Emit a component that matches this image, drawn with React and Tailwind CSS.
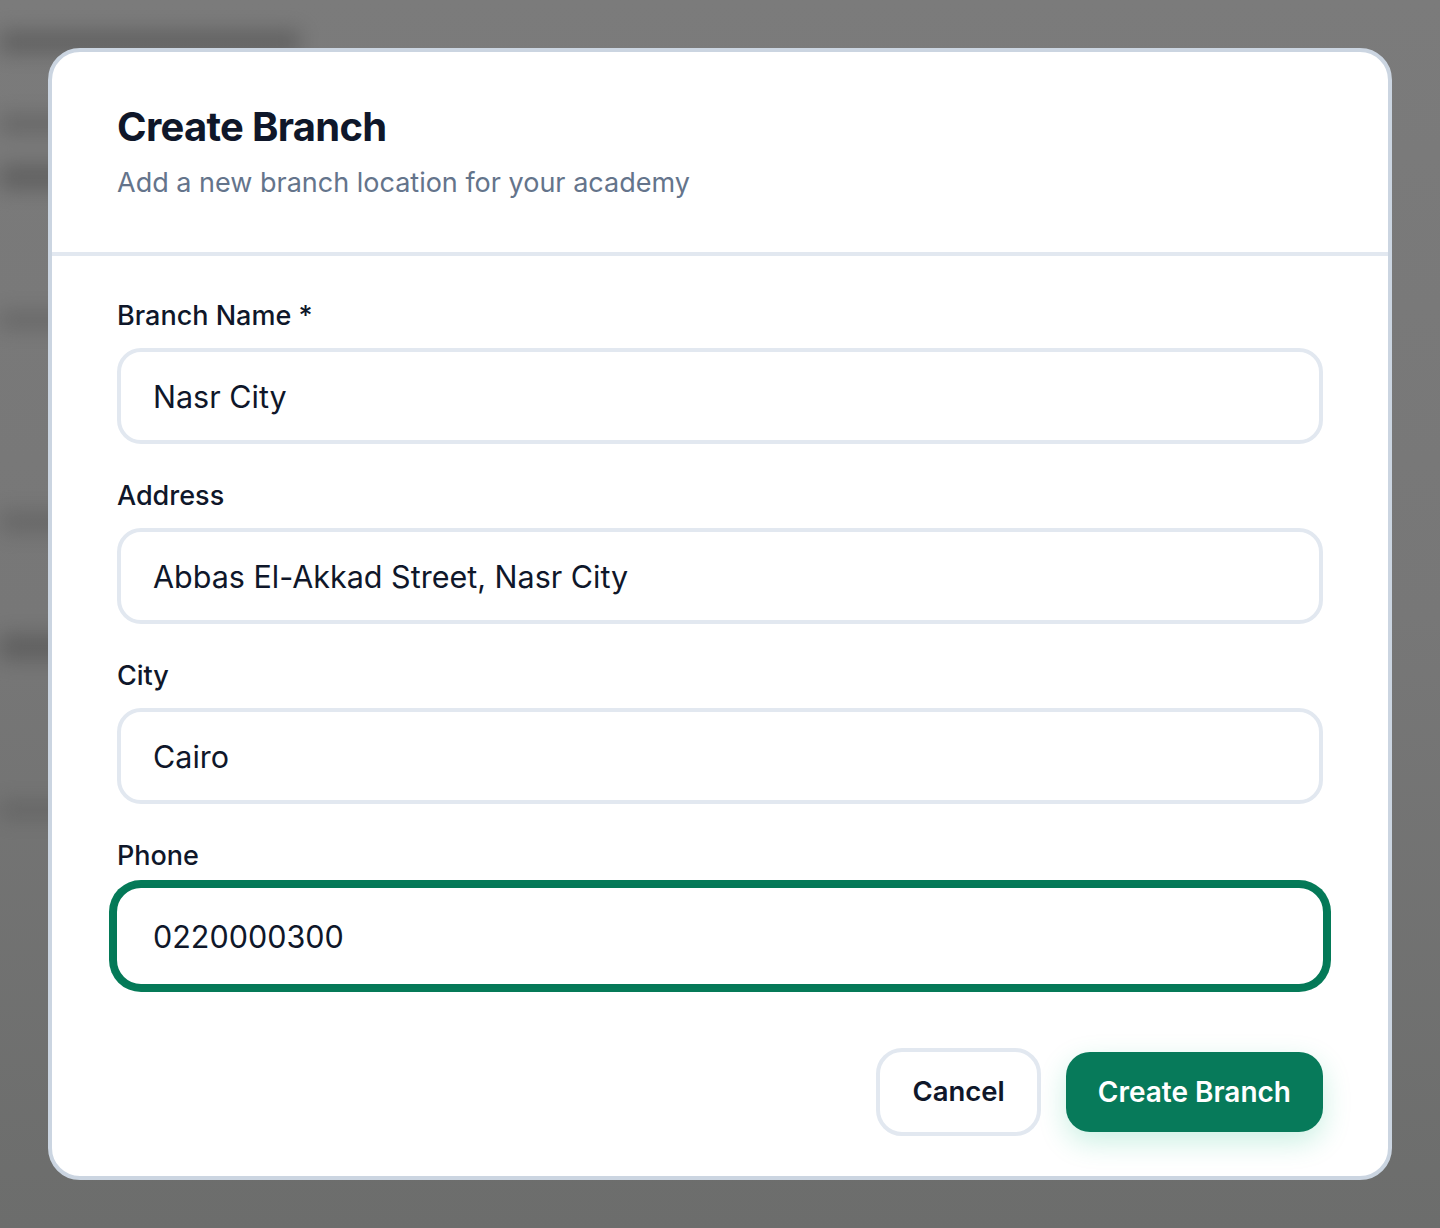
import { useState } from 'react';

const fields = [
  { id: 'name', label: 'Branch Name *', value: 'Nasr City' },
  { id: 'address', label: 'Address', value: 'Abbas El-Akkad Street, Nasr City' },
  { id: 'city', label: 'City', value: 'Cairo' },
  { id: 'phone', label: 'Phone', value: '0220000300' },
];

const Field = ({ field, focused, onChange }) => (
  <div className="flex flex-col">
    <label
      htmlFor={field.id}
      className="text-[27px] leading-[36px] font-medium text-[#0f172a] mb-[14px]"
    >
      {field.label}
    </label>
    <input
      id={field.id}
      value={field.value}
      onChange={(e) => onChange(field.id, e.target.value)}
      className={`h-[96px] w-full rounded-[24px] border-4 bg-white px-[32px] text-[30.5px] text-[#0f172a] outline-none ${
        focused
          ? 'border-white shadow-[0_0_0_4px_#047857,0_0_0_8px_#057a58]'
          : 'border-[#e2e8f0]'
      }`}
    />
  </div>
);

export default function App() {
  const [values, setValues] = useState(fields);

  const handleChange = (id, value) => {
    setValues((prev) => prev.map((f) => (f.id === id ? { ...f, value } : f)));
  };

  return (
    <div
      className="relative min-h-[1228px] w-full overflow-hidden bg-gradient-to-b from-[#7b7b7b] via-[#777777] to-[#6c6d6c] p-[48px]"
      style={{ fontFamily: 'Inter, "Noto Sans", sans-serif' }}
    >
      {/* Blurred page behind the overlay */}
      <div className="absolute inset-0 flex flex-col pt-[30px] blur-[10px] opacity-50">
        <div className="h-[24px] w-[300px] bg-[#4a4a4a]" />
        <div className="mt-[60px] h-[20px] w-[300px] bg-[#555]" />
        <div className="mt-[30px] h-[26px] w-[300px] bg-[#4a4a4a]" />
        <div className="mt-[120px] h-[20px] w-[300px] bg-[#5a5a5a]" />
        <div className="mt-[180px] h-[24px] w-[300px] bg-[#5a5a5a]" />
        <div className="mt-[100px] h-[26px] w-[300px] bg-[#4a4a4a]" />
        <div className="mt-[140px] h-[20px] w-[300px] bg-[#5a5a5a]" />
      </div>

      <div className="relative flex flex-col rounded-[32px] border-4 border-[#cbd5e1] bg-white">
        {/* Header */}
        <div className="px-[65px] py-[51px] border-b-4 border-[#e2e8f0]">
          <h2 className="text-[40px] leading-[48px] font-bold tracking-[-0.7px] text-[#0f172a]">
            Create Branch
          </h2>
          <p className="mt-[14px] text-[27px] leading-[36px] text-[#64748b]">
            Add a new branch location for your academy
          </p>
        </div>

        {/* Form */}
        <div className="px-[65px] pt-[42px] pb-[40px]">
          <div className="flex flex-col gap-[34px]">
            {values.map((f) => (
              <Field key={f.id} field={f} focused={f.id === 'phone'} onChange={handleChange} />
            ))}
          </div>

          {/* Actions */}
          <div className="mt-[64px] flex items-center justify-end gap-[25px]">
            <button className="h-[88px] rounded-[26px] border-4 border-[#e2e8f0] bg-white px-[32px] text-[27.5px] font-semibold text-[#0f172a]">
              Cancel
            </button>
            <button className="h-[80px] rounded-[24px] bg-[#077a5a] px-[32px] text-[28px] font-semibold text-white shadow-[0_10px_28px_rgba(16,185,129,0.22)]">
              Create Branch
            </button>
          </div>
        </div>
      </div>
    </div>
  );
}
